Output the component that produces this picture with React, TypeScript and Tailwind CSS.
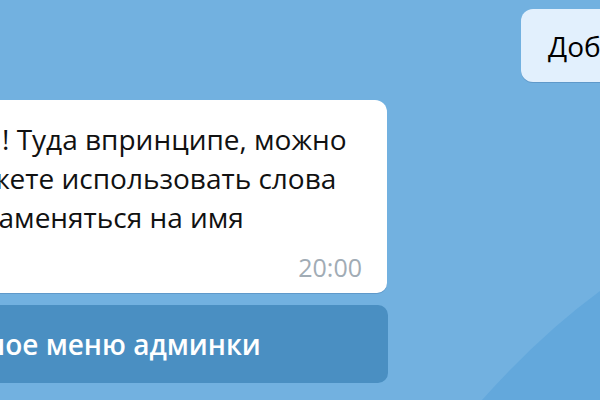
import React from "react";

export default function App() {
  return (
    <div
      className="relative w-[600px] h-[400px] overflow-hidden bg-[#72b1e0]"
      style={{ fontFamily: '"Open Sans", "Noto Sans", sans-serif' }}
    >
      <svg className="absolute inset-0" width="600" height="400" viewBox="0 0 600 400">
        <path d="M600 291 Q540 335 482 400 L600 400 Z" fill="#63a8dc" />
      </svg>

      <div className="relative flex flex-col">
        <div className="flex pt-[9px] pl-[521px]">
          <div className="shrink-0 flex items-center h-[73px] pl-[27px] pr-[28px] rounded-[12px] bg-[#e2f0fd] shadow-[0_1px_0_rgba(60,110,160,0.35)] text-[28px] text-black whitespace-nowrap">
            Добавить кнопку
          </div>
        </div>

        <div className="mt-[18px] w-[387px] flex flex-col bg-white rounded-tr-[12px] rounded-br-[10px] shadow-[0_1px_0_rgba(60,110,160,0.35)] pt-[20px] text-[28px] leading-[39px] text-[#111] whitespace-nowrap">
          <div className="ml-[2px]">! Туда впринципе, можно</div>
          <div className="-ml-[11px]">жете использовать слова</div>
          <div className="-ml-[15px]">заменяться на имя</div>
          <div className="mt-[15px] self-end pr-[25px] pb-[11px] text-[25px] leading-[30px] text-[#a1acb5]">
            20:00
          </div>
        </div>

        <div className="mt-[12px] w-[388px] h-[78px] flex items-center bg-[#4a8fc2] rounded-r-[10px] text-[28px] font-semibold text-white whitespace-nowrap">
          <span className="-ml-[13px]">ное меню админки</span>
        </div>
      </div>
    </div>
  );
}
